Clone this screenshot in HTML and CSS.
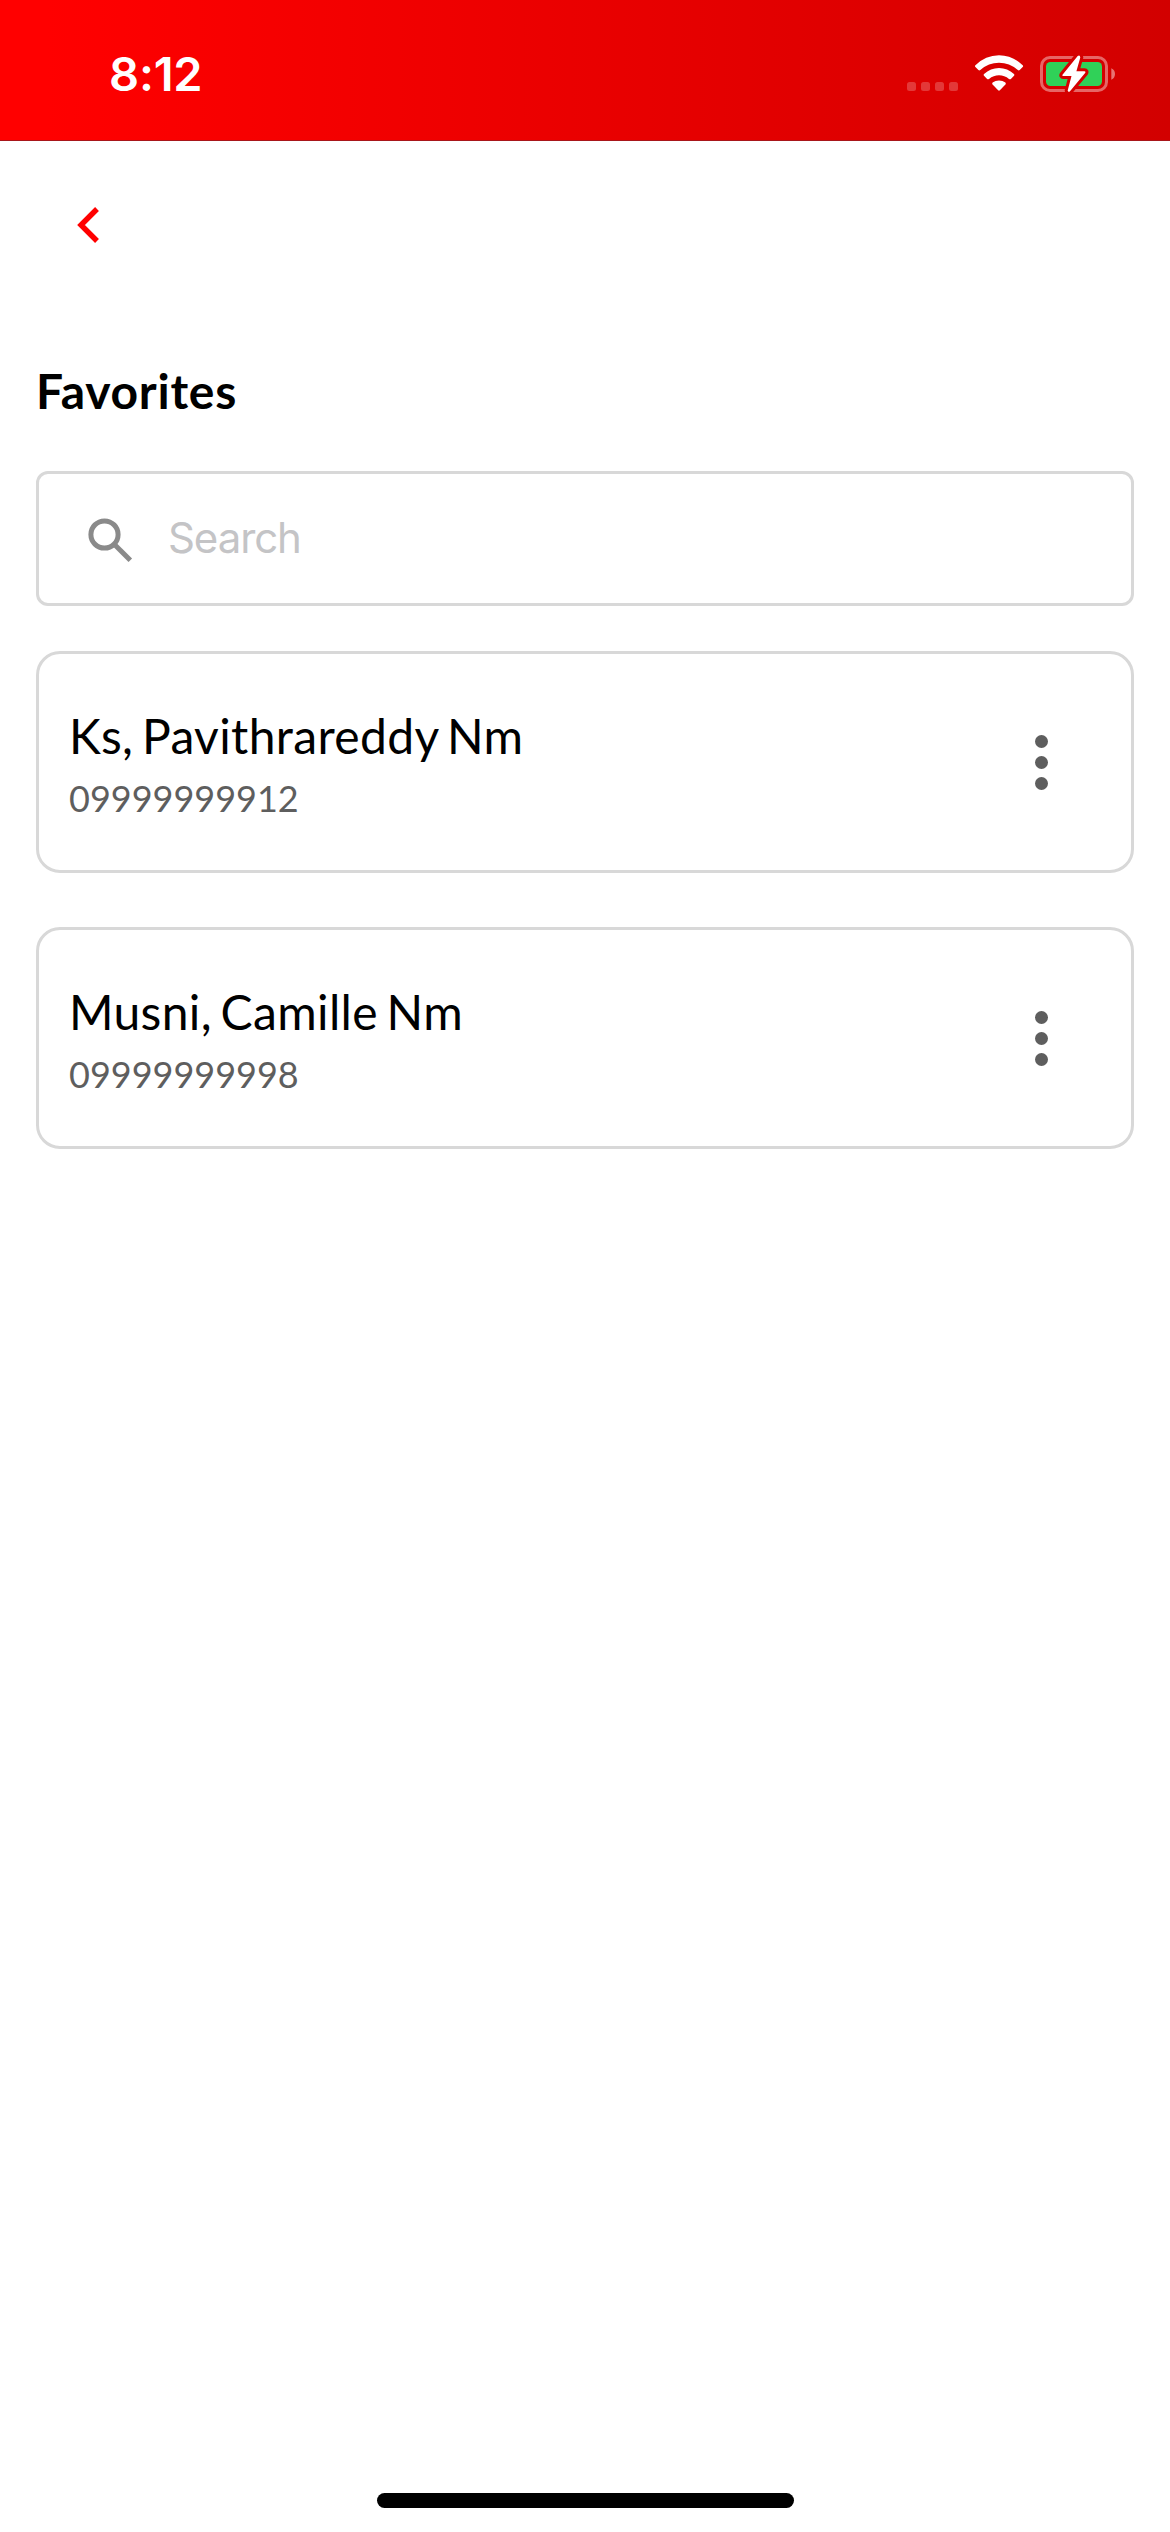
FILE: index.html
```html
<!DOCTYPE html>
<html lang="en">
<head>
<meta charset="utf-8">
<title>Favorites</title>
<link rel="stylesheet" href="styles.css">
</head>
<body>
<header class="status-bar">
  <time class="clock">8:12</time>
  <svg class="status-icons" width="210" height="44" viewBox="906 52 210 44" aria-hidden="true">
    <g fill="#fff" fill-opacity=".22">
      <rect x="907" y="82" width="9" height="9" rx="2.5"/>
      <rect x="921" y="82" width="9" height="9" rx="2.5"/>
      <rect x="935" y="82" width="9" height="9" rx="2.5"/>
      <rect x="949" y="82" width="9" height="9" rx="2.5"/>
    </g>
    <g fill="#fff">
      <path d="M975.4 65.2Q985.5 55.2 999 55.2T1022.700 65.200Q1023.600 66.100 1022.700 67L1019.700 70Q1018.800 70.900 1017.800 70Q1009.500 62.800 999 62.800T980.300 70Q979.300 70.900 978.400 70L975.400 67Q974.500 66.100 975.400 65.200Z"/>
      <path d="M984 74Q990.500 67.900 999 67.900T1014 74Q1014.900 74.900 1014 75.800L1010.900 78.900Q1010 79.700 1009 78.900Q1004.500 75.300 999 75.300T989 78.900Q988 79.700 987.100 78.900L984 75.800Q983.100 74.900 984 74Z"/>
      <path d="M992.600 82.600Q995.300 80.500 999 80.500T1005.400 82.600Q1006.300 83.500 1005.400 84.500L999.900 90.200Q999 91.100 998.100 90.200L992.600 84.500Q991.700 83.500 992.600 82.600Z"/>
    </g>
    <rect x="1041.500" y="57.500" width="65" height="33" rx="8.500" fill="none" stroke="#fff" stroke-opacity=".4" stroke-width="3"/>
    <path d="M1111.300 68.300Q1115 70 1115 74T1111.300 79.700Z" fill="#fff" fill-opacity=".45"/>
    <rect x="1046" y="62" width="56" height="24" rx="4.500" fill="#30d158"/>
    <path d="M1077.700 56L1062.500 74.700Q1061.800 76 1063.200 76H1071.500L1067.700 90.500Q1068 92.600 1069.800 91.400L1085.300 72.800Q1086 71.300 1084.500 71.300H1076.400L1080.300 57.500Q1080 54.500 1077.700 56Z" fill="#fff" stroke="#d50000" stroke-width="6" stroke-linejoin="round" paint-order="stroke"/>
  </svg>
</header>
<nav class="nav">
  <button class="back" aria-label="Back">
    <svg width="24" height="38" viewBox="0 0 24 38"><path d="M21 3L5 19L21 35" fill="none" stroke="#f00" stroke-width="5.400"/></svg>
  </button>
</nav>
<main class="content">
  <h1 class="title">Favorites</h1>
  <label class="search">
    <svg class="search-icon" width="46" height="46" viewBox="0 0 46 46" fill="none" stroke="#8a8a8a" aria-hidden="true"><circle cx="17.500" cy="17.500" r="13.600" stroke-width="5"/><path d="M27.500 27.500L43.300 43.300" stroke-width="5"/><path d="M28 30L30 28" stroke-width="5"/></svg>
    <input class="search-input" type="text" placeholder="Search">
  </label>
  <ul class="list">
    <li class="card">
      <div class="person">
        <span class="name">Ks, Pavithrareddy Nm</span>
        <span class="number">09999999912</span>
      </div>
      <button class="more" aria-label="More"><i></i><i></i><i></i></button>
    </li>
    <li class="card">
      <div class="person">
        <span class="name">Musni, Camille Nm</span>
        <span class="number">09999999998</span>
      </div>
      <button class="more" aria-label="More"><i></i><i></i><i></i></button>
    </li>
  </ul>
</main>
<footer class="home"><div class="home-bar"></div></footer>
</body>
</html>
```
FILE: styles.css
```css
* { box-sizing: border-box; margin: 0; padding: 0; }
body {
  min-height: 2532px;
  display: flex;
  flex-direction: column;
  background: #fff;
  color: #000;
  font-family: Lato, sans-serif;
}
svg { display: block; }
button { border: 0; background: none; }
.status-bar {
  height: 141px;
  padding: 0 54px 0 109px;
  display: flex;
  justify-content: space-between;
  align-items: flex-start;
  border-bottom: 1px solid #a8161a;
  background: linear-gradient(90deg, #f00 4%, #d20000 100%);
}
.clock {
  padding-top: 46px;
  color: #fff;
  font: 600 47px/56px Inter, sans-serif;
  letter-spacing: -0.2px;
}
.status-icons { margin-top: 52px; }
.nav { height: 221px; padding: 65px 0 0 76px; }
.back { display: block; }
.content { flex: 1; padding: 0 36px; }
.title { font-size: 48px; line-height: 58px; font-weight: 700; letter-spacing: 0.75px; }
.search {
  height: 135px;
  margin-top: 51px;
  padding-left: 48px;
  display: flex;
  align-items: center;
  gap: 35px;
  border: 3px solid #d8d8d8;
  border-radius: 12px;
}
.search-icon { margin-top: 2px; }
.search-input {
  flex: 1;
  margin-bottom: 2px;
  border: 0;
  outline: 0;
  background: none;
  font: 400 42px/54px Inter, sans-serif;
  letter-spacing: -1.1px;
}
.search-input::placeholder { color: #c4c4c6; opacity: 1; }
.list {
  margin-top: 45px;
  display: flex;
  flex-direction: column;
  gap: 54px;
  list-style: none;
}
.card {
  height: 222px;
  padding: 0 83px 0 30px;
  display: flex;
  justify-content: space-between;
  align-items: center;
  border: 3px solid #d8d8d8;
  border-radius: 24px;
}
.person { display: flex; flex-direction: column; gap: 12px; padding-top: 2px; }
.name { font-size: 48px; line-height: 58px; letter-spacing: 0.35px; word-spacing: -4px; }
.number { font-size: 36px; line-height: 43px; color: #5e5e5e; }
.more { display: flex; flex-direction: column; gap: 8px; }
.more i { width: 13px; height: 13px; border-radius: 50%; background: #5e5e5e; }
.home { height: 39px; display: flex; justify-content: center; }
.home-bar { width: 417px; height: 15px; border-radius: 8px; background: #000; }
```
